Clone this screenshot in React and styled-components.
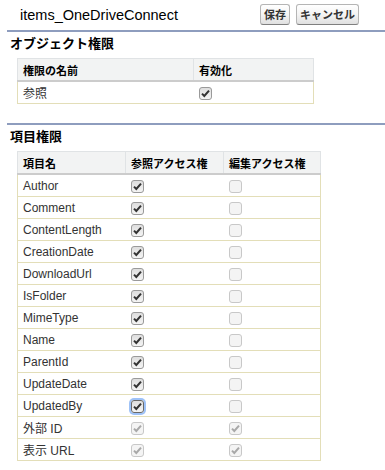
import styled, { createGlobalStyle, css } from "styled-components";

const GlobalStyle = createGlobalStyle`
  body {
    margin: 0;
    background: #fff;
    font-family: "Liberation Sans", Arial, "Noto Sans CJK JP", sans-serif;
    color: #000;
  }
`;

const Page = styled.div`
  width: 385px;
`;

const TopBar = styled.div`
  display: flex;
  align-items: center;
  height: 30px;
  padding-left: 20px;
`;

const Title = styled.div`
  width: 240px;
  font-size: 14.5px;
  color: #000;
`;

const Buttons = styled.div`
  display: flex;
  gap: 6px;
  margin-top: -2px;
`;

const Button = styled.button`
  font-family: "Liberation Sans", Arial, "Noto Sans CJK JP", sans-serif;
  font-size: 11px;
  font-weight: bold;
  color: #333;
  height: 21px;
  padding: 0 3px;
  border: 1px solid #b5b5b5;
  border-bottom-color: #7f7f7f;
  border-radius: 3px;
  background: linear-gradient(#fff, #f4f4f4 50%, #e0e0e0);
`;

const Section = styled.section`
  margin-left: 7px;
  border-top: 2px solid #8e9dbe;
  padding-top: 4px;
  margin-bottom: 19px;
`;

const Heading = styled.h3`
  margin: 0 0 0 3px;
  font-size: 13px;
  font-weight: bold;
  color: #000;
  line-height: 15px;
`;

const Table = styled.table`
  margin: 7px 0 0 10px;
  width: ${(p) => p.$width}px;
  table-layout: fixed;
  border-collapse: collapse;
  border: 1px solid #e0e3e5;
  font-size: 12px;
`;

const Th = styled.th`
  height: 21px;
  padding: 0 5px;
  text-align: left;
  font-size: 11px;
  font-weight: bold;
  color: #000;
  white-space: nowrap;
  background: #f2f3f3;
  border-bottom: 2px solid #ccc;
  border-left: 1px solid #e0e3e5;
`;

const Td = styled.td`
  height: 21px;
  padding: 0 5px;
  color: #333;
  white-space: nowrap;
  border-bottom: 1px solid #e3deb8;
`;

const Row = styled.tr`
  & > td:first-child {
    border-left: 1px solid #e3deb8;
  }
  & > td:last-child {
    border-right: 1px solid #e3deb8;
  }
`;

const Box = styled.span`
  display: inline-block;
  position: relative;
  vertical-align: middle;
  width: 11px;
  height: 11px;
  border: 1px solid #9a9a9a;
  border-radius: 3px;
  background: linear-gradient(#dedede, #f4f4f4);
  color: #333;
  ${(p) =>
    p.$disabled &&
    css`
      border-color: #c8c8c8;
      background: #f4f4f4;
      color: #a8a8a8;
    `}
  ${(p) =>
    p.$focus &&
    css`
      box-shadow: 0 0 0 2px #9ec2f7;
      border-color: #6a6a6a;
    `}
`;

const Tick = () => (
  <svg
    width="9"
    height="9"
    viewBox="0 0 9 9"
    style={{ position: "absolute", left: 1, top: 1 }}
  >
    <path
      d="M1 4.6 L3.3 7 L8 1.6"
      fill="none"
      stroke="currentColor"
      strokeWidth="2"
    />
  </svg>
);

const Check = ({ checked, disabled, focus }) => (
  <Box $disabled={disabled} $focus={focus}>
    {checked && <Tick />}
  </Box>
);

const fields = [
  { name: "Author" },
  { name: "Comment" },
  { name: "ContentLength" },
  { name: "CreationDate" },
  { name: "DownloadUrl" },
  { name: "IsFolder" },
  { name: "MimeType" },
  { name: "Name" },
  { name: "ParentId" },
  { name: "UpdateDate" },
  { name: "UpdatedBy", focus: true },
  { name: "外部 ID", locked: true },
  { name: "表示 URL", locked: true },
];

export default function App() {
  return (
    <Page>
      <GlobalStyle />
      <TopBar>
        <Title>items_OneDriveConnect</Title>
        <Buttons>
          <Button>保存</Button>
          <Button>キャンセル</Button>
        </Buttons>
      </TopBar>

      <Section>
        <Heading>オブジェクト権限</Heading>
        <Table $width={297}>
          <colgroup>
            <col style={{ width: 176 }} />
            <col />
          </colgroup>
          <thead>
            <tr>
              <Th>権限の名前</Th>
              <Th>有効化</Th>
            </tr>
          </thead>
          <tbody>
            <Row>
              <Td>参照</Td>
              <Td>
                <Check checked />
              </Td>
            </Row>
          </tbody>
        </Table>
      </Section>

      <Section>
        <Heading>項目権限</Heading>
        <Table $width={304}>
          <colgroup>
            <col style={{ width: 108 }} />
            <col style={{ width: 98 }} />
            <col />
          </colgroup>
          <thead>
            <tr>
              <Th>項目名</Th>
              <Th>参照アクセス権</Th>
              <Th>編集アクセス権</Th>
            </tr>
          </thead>
          <tbody>
            {fields.map((f) => (
              <Row key={f.name}>
                <Td>{f.name}</Td>
                <Td>
                  <Check checked disabled={f.locked} focus={f.focus} />
                </Td>
                <Td>
                  <Check checked={f.locked} disabled />
                </Td>
              </Row>
            ))}
          </tbody>
        </Table>
      </Section>
    </Page>
  );
}
